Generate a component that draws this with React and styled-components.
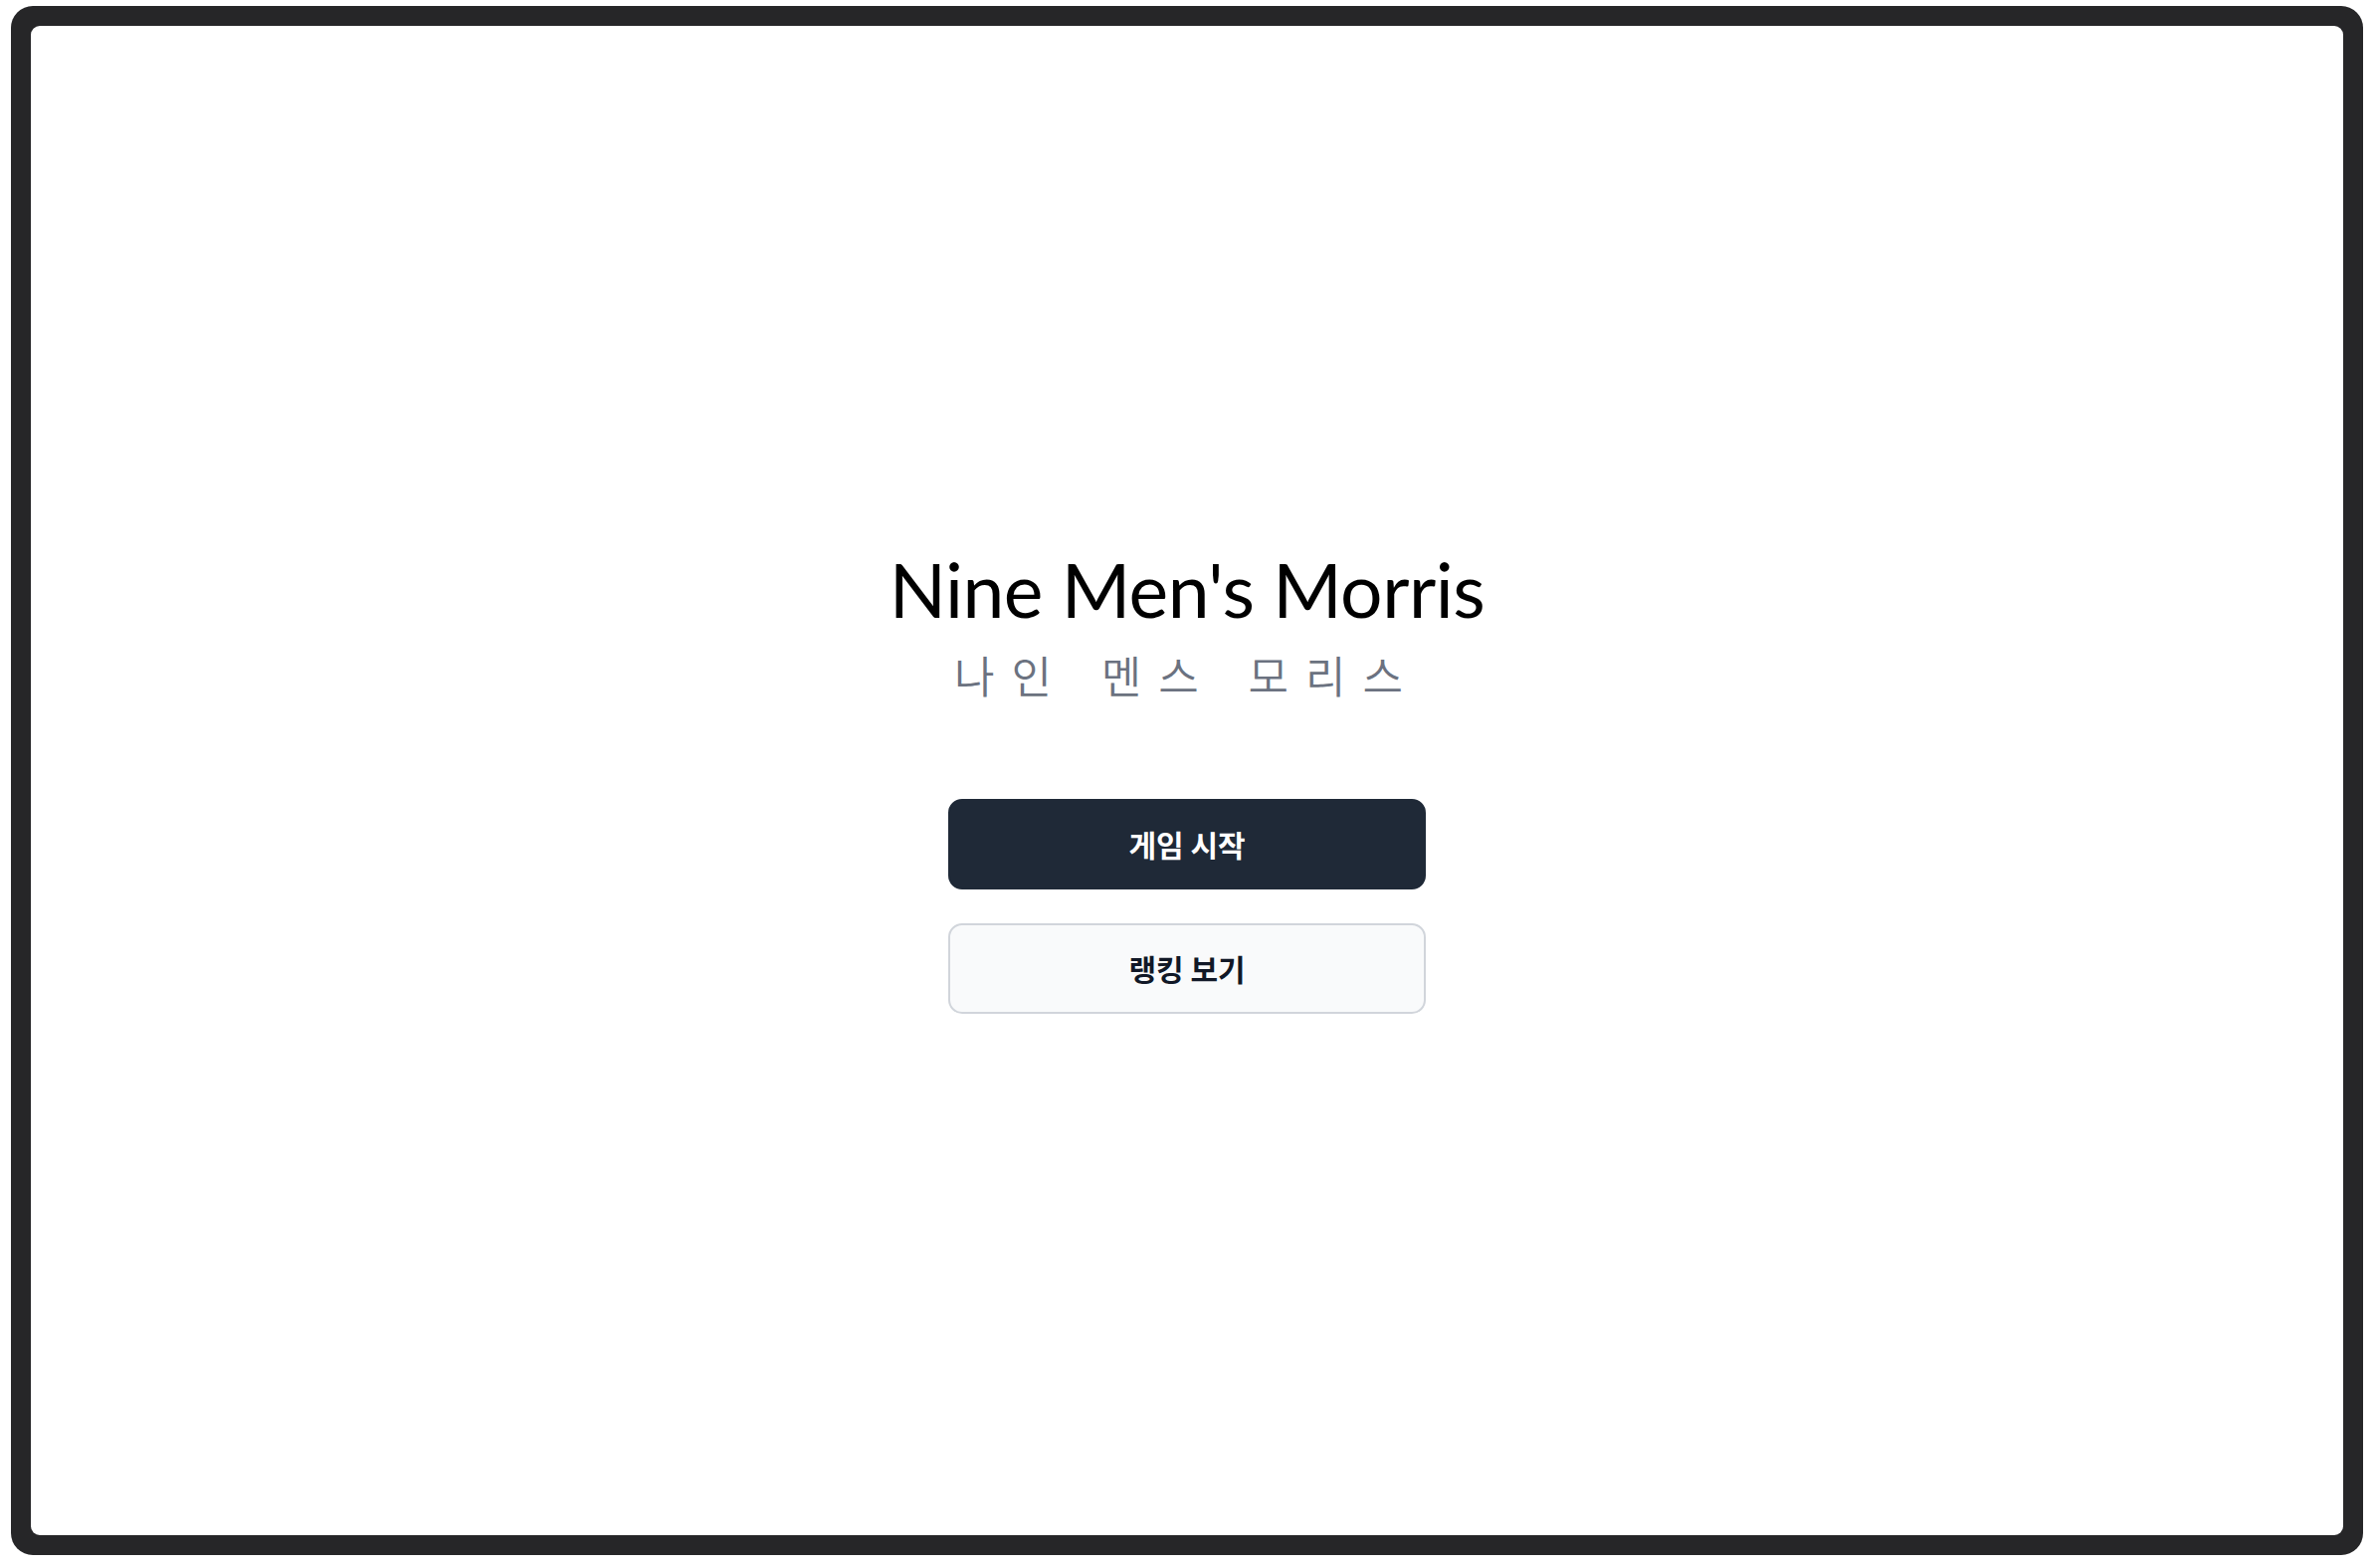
import styled, { createGlobalStyle } from "styled-components";

const GlobalStyle = createGlobalStyle`
    html, body {
        margin: 0;
        padding: 0;
        background: #ffffff;
    }
    body {
        font-family: Lato, "Noto Sans CJK KR", sans-serif;
    }
    * {
        box-sizing: border-box;
    }
`;

export default function App(){
    function startGame(){
        console.log('start');
    }
    function openRanking(){
        console.log('ranking');
    }
    return(
        <>
            <GlobalStyle />
            <Device>
                <Screen>
                    <Title>Nine Men's Morris</Title>
                    <Subtitle>나인 멘스 모리스</Subtitle>
                    <ButtonWrapper>
                        <MenuButton primary onClick={startGame}>게임 시작</MenuButton>
                        <MenuButton onClick={openRanking}>랭킹 보기</MenuButton>
                    </ButtonWrapper>
                </Screen>
            </Device>
        </>
    );
}

const Device = styled.div`
    margin: 6px 15px 13px 11px;
    height: calc(100vh - 19px);
    padding: 20px;
    background-color: #262628;
    border-radius: 22px;
    display: flex;
`;

const Screen = styled.div`
    flex: 1;
    background-color: #ffffff;
    border-radius: 9px;
    display: flex;
    flex-direction: column;
    align-items: center;
    justify-content: center;
    padding-top: 4px;
`;

const Title = styled.h1`
    margin: 0;
    font-family: Lato, "Noto Sans", sans-serif;
    font-weight: 400;
    font-size: 75px;
    line-height: 75px;
    color: #000000;
    letter-spacing: -0.5px;
`;

const Subtitle = styled.div`
    margin-top: 26px;
    font-family: "Noto Sans CJK KR", sans-serif;
    font-weight: 350;
    font-size: 44px;
    line-height: 44px;
    letter-spacing: 17px;
    word-spacing: 6px;
    color: #6b7280;
`;

const ButtonWrapper = styled.div`
    margin-top: 103px;
    display: flex;
    flex-direction: column;
    gap: 34px;
    width: 480px;
`;

const MenuButton = styled.button`
    height: 91px;
    width: 100%;
    display: flex;
    align-items: center;
    justify-content: center;
    font-family: "Noto Sans CJK KR", sans-serif;
    font-weight: 700;
    font-size: 30px;
    border-radius: 14px;
    cursor: pointer;
    color: ${p => p.primary ? '#ffffff' : '#111827'};
    background-color: ${p => p.primary ? '#1f2937' : '#f9fafb'};
    border: 2px solid ${p => p.primary ? '#1f2937' : '#d1d5db'};

    &:hover{
        background-color: ${p => p.primary ? '#374151' : '#f3f4f6'};
    }
`;
